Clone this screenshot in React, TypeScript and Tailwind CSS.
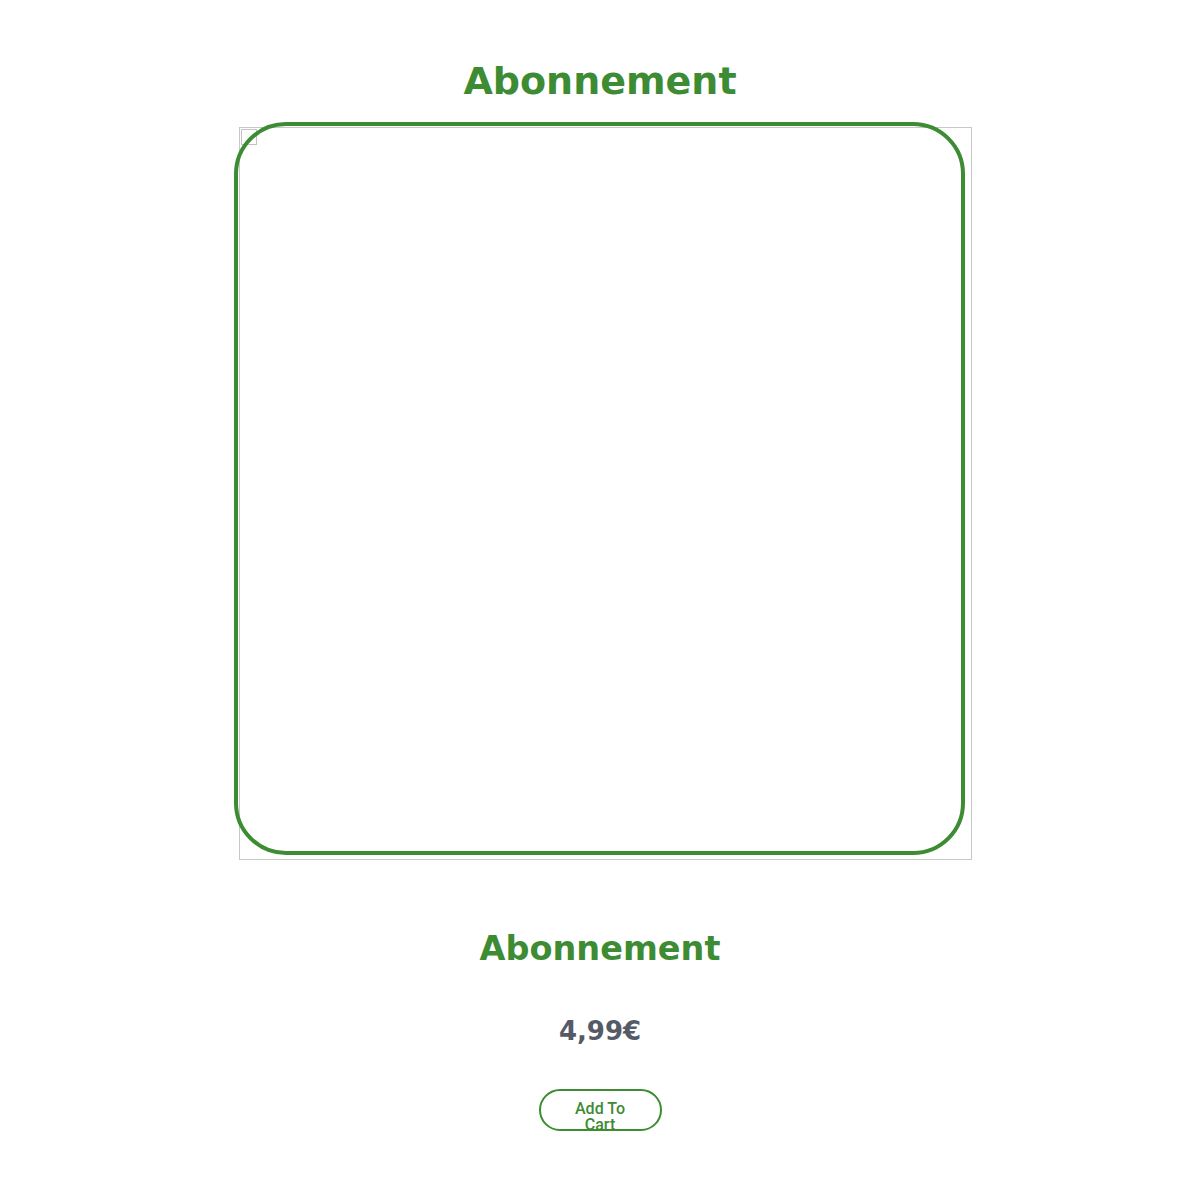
import React from "react";

export default function App() {
  return (
    <div className="w-[1200px] min-h-[1188px] bg-white flex flex-col items-center font-['DejaVu_Sans',sans-serif]">
      <h1 className="mt-[58px] text-[38px] leading-[46px] font-bold text-[#3d8b33]">
        Abonnement
      </h1>
      <div className="relative mt-[23px] w-[733px] h-[733px] border border-[#c8c8c8] ml-[11px]">
        <div className="absolute left-[1px] top-[1px] w-[16px] h-[16px] border border-[#c4c4c4]" />
        <div className="absolute left-[-6px] top-[-6px] w-[731px] h-[733px] border-[4px] border-[#3d8b33] rounded-[52px]" />
      </div>
      <h2 className="mt-[69px] text-[33.5px] leading-[40px] font-bold text-[#3d8b33]">
        Abonnement
      </h2>
      <div className="mt-[47px] text-[26px] leading-[30px] font-bold text-[#555a66]">
        4,99€
      </div>
      <button className="mt-[43px] w-[123px] h-[42px] rounded-full border-2 border-[#3d8b33] bg-white overflow-hidden flex justify-center pt-[10px]">
        <span className="w-[60px] text-[16px] leading-[16px] font-medium text-[#3d8b33] text-center font-['Roboto',sans-serif]">
          Add To Cart
        </span>
      </button>
    </div>
  );
}
